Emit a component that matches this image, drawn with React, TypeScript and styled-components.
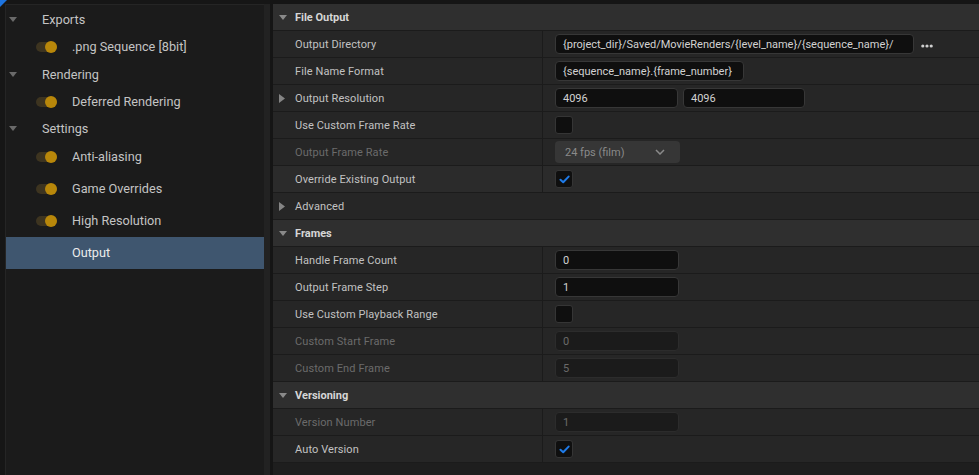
import React from 'react';
import styled, { createGlobalStyle } from 'styled-components';

const GlobalStyle = createGlobalStyle`
    html, body {
        margin: 0;
        padding: 0;
        background: #151515;
    }
    body {
        font-family: Roboto, "Noto Sans", "Liberation Sans", sans-serif;
    }
`;

const Shell = styled.div`
    display: flex;
    gap: 3px;
    width: 979px;
    height: 475px;
    overflow: hidden;
    background: #151515;
`;

/* ---------- outliner on the left ---------- */

const Sidebar = styled.div`
    position: relative;
    flex: none;
    width: 270px;
    display: flex;
    box-sizing: border-box;
    padding: 4px 0 0 5px;
    background: #161616;
`;

const Corner = styled.div`
    position: absolute;
    top: 0;
    left: 0;
    width: 0;
    height: 0;
    border-top: 7px solid #1d74e0;
    border-right: 7px solid transparent;
`;

const Tree = styled.div`
    flex: 1;
    display: flex;
    flex-direction: column;
    padding-top: 1px;
    background: #1b1b1b;
    border-left: 1px solid #252525;
    border-top: 1px solid #252525;
`;

const ScrollTrack = styled.div`
    flex: none;
    width: 6px;
    background: #222222;
`;

const TreeRow = styled.div<{ $h: number; $indent: number; $lift?: number; $selected?: boolean }>`
    display: flex;
    align-items: center;
    height: ${p => p.$h}px;
    box-sizing: border-box;
    padding-left: ${p => p.$indent}px;
    padding-bottom: ${p => p.$lift ?? 0}px;
    background: ${p => (p.$selected ? '#3f566f' : 'transparent')};
    color: ${p => (p.$selected ? '#ececec' : '#c4c4c4')};
    font-size: 12.7px;
    white-space: nowrap;
`;

const TreeCaret = styled.span`
    display: flex;
    width: 8px;
    margin-right: 25px;
`;

const Toggle = styled.span`
    display: flex;
    justify-content: flex-end;
    align-items: center;
    width: 21px;
    height: 10px;
    margin-right: 15px;
    border-radius: 5px;
    background: #3d3420;
`;

const Knob = styled.span`
    width: 12px;
    height: 12px;
    margin: -1px 0;
    border-radius: 50%;
    background: #b8870a;
`;

/* ---------- details panel on the right ---------- */

const Details = styled.div`
    flex: 1;
    display: flex;
    flex-direction: column;
    padding-top: 4px;
`;

const PropertyList = styled.div`
    flex: 1;
    background: #1e1e1e;
`;

const Row = styled.div<{ $hover?: boolean }>`
    display: flex;
    height: 26px;
    border-bottom: 1px solid #1b1b1b;
    background: ${p => (p.$hover ? '#2b2b2b' : '#262626')};
`;

const HeaderRow = styled.div`
    display: flex;
    align-items: center;
    height: 26px;
    padding-left: 6px;
    border-bottom: 1px solid #1b1b1b;
    background: #2f2f2f;
    color: #d6d6d6;
    font-size: 11px;
    font-weight: 700;
`;

const PlainRow = styled(Row)`
    align-items: center;
    padding-left: 6px;
`;

const NameCell = styled.div`
    flex: none;
    display: flex;
    align-items: center;
    width: 270px;
    box-sizing: border-box;
    padding-left: 6px;
    border-right: 1px solid #1b1b1b;
`;

const Expander = styled.span`
    display: flex;
    width: 16px;
`;

const Label = styled.span<{ $disabled?: boolean }>`
    font-size: 11px;
    letter-spacing: 0.1px;
    color: ${p => (p.$disabled ? '#6b6b6b' : '#c2c2c2')};
    white-space: nowrap;
`;

const ValueCell = styled.div`
    flex: 1;
    display: flex;
    align-items: center;
    gap: 5px;
    padding-left: 12px;
`;

const TextBox = styled.div<{ $w: number; $disabled?: boolean }>`
    display: flex;
    align-items: center;
    width: ${p => p.$w}px;
    height: 20px;
    box-sizing: border-box;
    padding: 0 7px;
    border: 1px solid ${p => (p.$disabled ? '#2c2c2c' : '#373737')};
    border-radius: 4px;
    background: ${p => (p.$disabled ? '#1b1b1b' : '#0f0f0f')};
    color: ${p => (p.$disabled ? '#6a6a6a' : '#d2d2d2')};
    font-size: 11px;
    white-space: nowrap;
    overflow: hidden;
`;

const Browse = styled.span`
    display: flex;
    margin-left: 2px;
    padding-top: 4px;
`;

const Check = styled.div`
    display: flex;
    align-items: center;
    justify-content: center;
    width: 18px;
    height: 18px;
    box-sizing: border-box;
    border: 1px solid #353535;
    border-radius: 3px;
    background: #0f0f0f;
`;

const Combo = styled.div`
    display: flex;
    align-items: center;
    justify-content: space-between;
    width: 125px;
    height: 22px;
    box-sizing: border-box;
    padding: 0 15px 0 10px;
    border-radius: 4px;
    background: #363636;
    color: #8a8a8a;
    font-size: 11px;
`;

const DownCaret = ({ color = '#858585' }: { color?: string }) => (
    <svg width="8" height="5" viewBox="0 0 8 5">
        <path d="M0 0H8L4 5Z" fill={color} />
    </svg>
);

const RightCaret = () => (
    <svg width="6" height="9" viewBox="0 0 6 9">
        <path d="M0 0L6 4.5L0 9Z" fill="#858585" />
    </svg>
);

const CheckMark = () => (
    <svg width="11" height="9" viewBox="0 0 11 9">
        <path d="M1.5 4.8L4.2 7.3L9.6 1.6" fill="none" stroke="#1f7be8" strokeWidth="2" strokeLinecap="round" strokeLinejoin="round" />
    </svg>
);

const Dots = () => (
    <svg width="12" height="4" viewBox="0 0 12 4">
        <circle cx="1.8" cy="2" r="1.6" fill="#cfcfcf" />
        <circle cx="6" cy="2" r="1.6" fill="#cfcfcf" />
        <circle cx="10.2" cy="2" r="1.6" fill="#cfcfcf" />
    </svg>
);

const Chevron = () => (
    <svg width="10" height="6" viewBox="0 0 10 6">
        <path d="M1 1L5 5L9 1" fill="none" stroke="#8a8a8a" strokeWidth="1.5" />
    </svg>
);

type Prop = {
    name: string;
    disabled?: boolean;
    expandable?: boolean;
    hover?: boolean;
    value: React.ReactNode;
};

const PropertyRow = ({ name, disabled, expandable, hover, value }: Prop) => (
    <Row $hover={hover}>
        <NameCell>
            <Expander>{expandable && <RightCaret />}</Expander>
            <Label $disabled={disabled}>{name}</Label>
        </NameCell>
        <ValueCell>{value}</ValueCell>
    </Row>
);

const Section = ({ title }: { title: string }) => (
    <HeaderRow>
        <Expander><DownCaret color="#8a8a8a" /></Expander>
        {title}
    </HeaderRow>
);

const outline = [
    { kind: 'group', label: 'Exports', h: 27 },
    { kind: 'item', label: '.png Sequence [8bit]', h: 27 },
    { kind: 'group', label: 'Rendering', h: 28 },
    { kind: 'item', label: 'Deferred Rendering', h: 27 },
    { kind: 'group', label: 'Settings', h: 26 },
    { kind: 'item', label: 'Anti-aliasing', h: 32 },
    { kind: 'item', label: 'Game Overrides', h: 32 },
    { kind: 'item', label: 'High Resolution', h: 32 },
    { kind: 'leaf', label: 'Output', h: 32 },
];

export default function App() {
    return (
        <>
            <GlobalStyle />
            <Shell>
                <Sidebar>
                    <Corner />
                    <Tree>
                        {outline.map(o => {
                            const lift = o.h === 32 ? 1 : 0;
                            if (o.kind === 'group') {
                                return (
                                    <TreeRow key={o.label} $h={o.h} $indent={3}>
                                        <TreeCaret><DownCaret color="#6a6a6a" /></TreeCaret>
                                        {o.label}
                                    </TreeRow>
                                );
                            }
                            if (o.kind === 'item') {
                                return (
                                    <TreeRow key={o.label} $h={o.h} $indent={30} $lift={lift}>
                                        <Toggle><Knob /></Toggle>
                                        {o.label}
                                    </TreeRow>
                                );
                            }
                            return (
                                <TreeRow key={o.label} $h={o.h} $indent={66} $lift={lift} $selected>
                                    {o.label}
                                </TreeRow>
                            );
                        })}
                    </Tree>
                    <ScrollTrack />
                </Sidebar>

                <Details>
                    <PropertyList>
                        <Section title="File Output" />
                        <PropertyRow
                            name="Output Directory"
                            value={
                                <>
                                    <TextBox $w={359}>{'{project_dir}/Saved/MovieRenders/{level_name}/{sequence_name}/'}</TextBox>
                                    <Browse><Dots /></Browse>
                                </>
                            }
                        />
                        <PropertyRow
                            name="File Name Format"
                            value={<TextBox $w={189}>{'{sequence_name}.{frame_number}'}</TextBox>}
                        />
                        <PropertyRow
                            name="Output Resolution"
                            expandable
                            value={
                                <>
                                    <TextBox $w={123}>4096</TextBox>
                                    <TextBox $w={122}>4096</TextBox>
                                </>
                            }
                        />
                        <PropertyRow name="Use Custom Frame Rate" value={<Check />} />
                        <PropertyRow
                            name="Output Frame Rate"
                            disabled
                            value={<Combo>24 fps (film)<Chevron /></Combo>}
                        />
                        <PropertyRow name="Override Existing Output" hover value={<Check><CheckMark /></Check>} />
                        <PlainRow>
                            <Expander><RightCaret /></Expander>
                            <Label>Advanced</Label>
                        </PlainRow>

                        <Section title="Frames" />
                        <PropertyRow name="Handle Frame Count" value={<TextBox $w={124}>0</TextBox>} />
                        <PropertyRow name="Output Frame Step" value={<TextBox $w={124}>1</TextBox>} />
                        <PropertyRow name="Use Custom Playback Range" value={<Check />} />
                        <PropertyRow name="Custom Start Frame" disabled value={<TextBox $w={124} $disabled>0</TextBox>} />
                        <PropertyRow name="Custom End Frame" disabled value={<TextBox $w={124} $disabled>5</TextBox>} />

                        <Section title="Versioning" />
                        <PropertyRow name="Version Number" disabled value={<TextBox $w={124} $disabled>1</TextBox>} />
                        <PropertyRow name="Auto Version" value={<Check><CheckMark /></Check>} />
                    </PropertyList>
                </Details>
            </Shell>
        </>
    );
}
